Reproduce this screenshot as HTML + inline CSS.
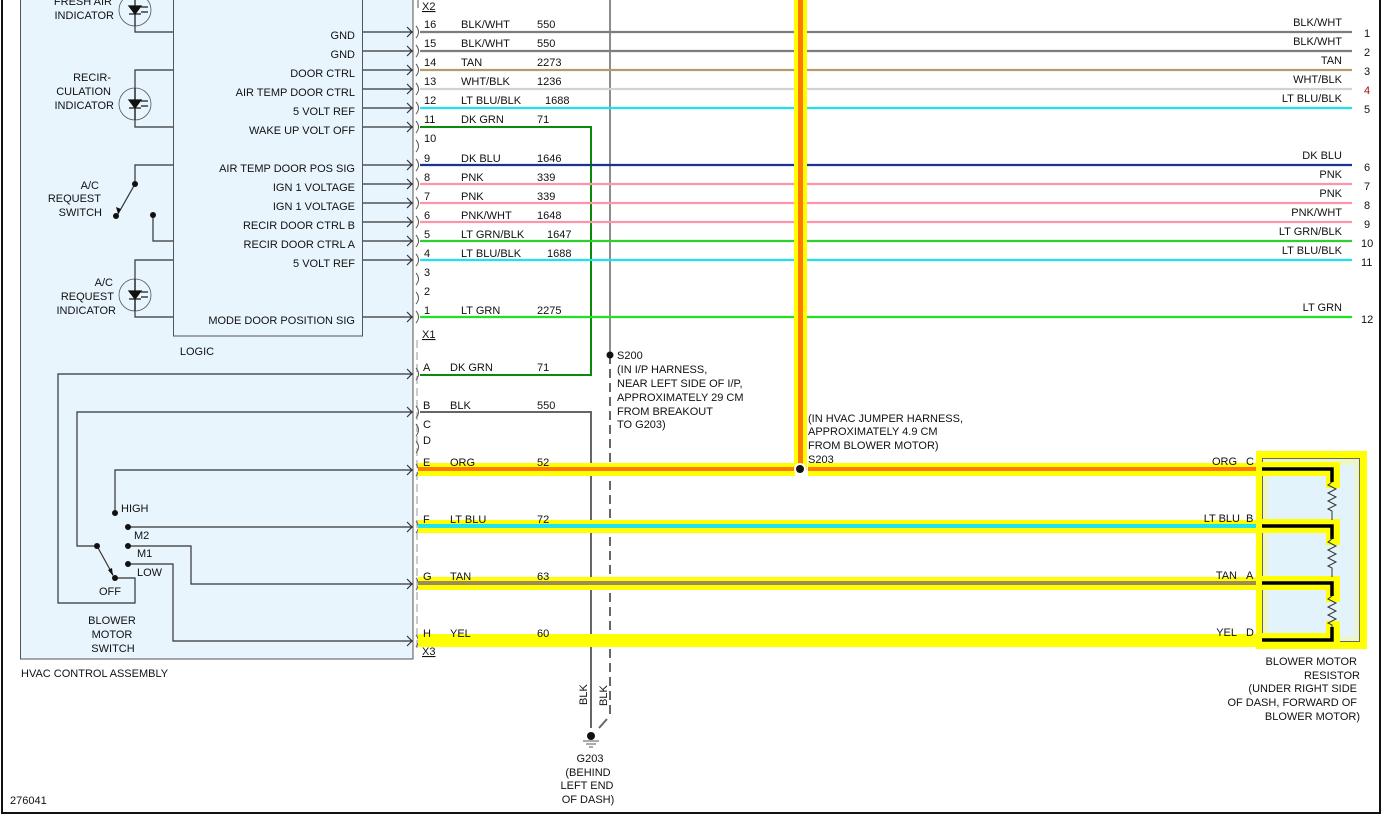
<!DOCTYPE html>
<html><head><meta charset="utf-8"><style>
html,body{margin:0;padding:0;background:#fff;}
svg{display:block;}
text{font-family:"Liberation Sans",Arial,sans-serif;font-size:11px;fill:#111;}
.r{text-anchor:end;}
.m{text-anchor:middle;}
</style></head><body>
<svg width="1385" height="819" viewBox="0 0 1385 819" xmlns="http://www.w3.org/2000/svg">
<rect x="0" y="0" width="1385" height="819" fill="#fff"/>
<line x1="2" y1="0" x2="2" y2="814" stroke="#111" stroke-width="2"/>
<line x1="1380" y1="0" x2="1380" y2="814" stroke="#111" stroke-width="2"/>
<line x1="2" y1="813" x2="1380" y2="813" stroke="#111" stroke-width="2"/>

<rect x="20.5" y="-5" width="392.5" height="664" fill="#e8f5fd" stroke="#555" stroke-width="1"/>
<rect x="173.5" y="-5" width="189" height="341" fill="#e8f5fd" stroke="#555" stroke-width="1"/>

<line x1="417" y1="340" x2="417" y2="652" stroke="#aaa" stroke-width="1.2" stroke-dasharray="8,4"/>

<g stroke="#333" stroke-width="1.2" fill="none">
<polyline points="173,32 135,32 135,26"/>
<polyline points="173,70 135,70 135,127 173,127"/>
<polyline points="173,165 135,165 135,184"/>
<line x1="135" y1="184" x2="118" y2="214"/>
<polyline points="153,215 153,241 173,241"/>
<polyline points="173,260 135,260 135,317 173,317"/>
<polyline points="413,374 58,374 58,603 135,603 135,578 115,578"/>
<polyline points="413,412 77,412 77,546 97,546"/>
<line x1="97" y1="546" x2="113" y2="575"/>
<polyline points="413,470 115,470 115,513"/>
<line x1="128" y1="527" x2="413" y2="527"/>
<polyline points="128,546 191,546 191,584 413,584"/>
<polyline points="128,564 173,564 173,641 413,641"/>
</g>
<g fill="#111">
<circle cx="135" cy="184" r="3"/><circle cx="116" cy="216" r="3"/><circle cx="153" cy="215" r="3"/>
<circle cx="115" cy="513" r="3"/><circle cx="128" cy="527" r="3"/><circle cx="97" cy="546" r="3"/>
<circle cx="128" cy="546" r="3"/><circle cx="128" cy="564" r="3"/><circle cx="115" cy="578" r="3"/>
<polygon points="113,576 108,570 112,568"/>
<polygon points="118,214 116,207 121,209"/>
</g>

<g fill="none" stroke="#555" stroke-width="0.8">
<circle cx="135" cy="10" r="16"/><circle cx="135" cy="104" r="16"/><circle cx="135" cy="295" r="16"/>
</g>
<g stroke="#111" stroke-width="1.2" fill="#111">
<line x1="135" y1="-6" x2="135" y2="26"/>
<line x1="135" y1="88" x2="135" y2="120"/>
<line x1="135" y1="279" x2="135" y2="311"/>
<polygon points="129,6 141,6 135,14"/><line x1="129" y1="14" x2="141" y2="14"/>
<polygon points="129,100 141,100 135,108"/><line x1="129" y1="108" x2="141" y2="108"/>
<polygon points="129,291 141,291 135,299"/><line x1="129" y1="299" x2="141" y2="299"/>
<line x1="141" y1="7" x2="148" y2="7"/><line x1="141" y1="12" x2="148" y2="12"/>
<line x1="141" y1="101" x2="148" y2="101"/><line x1="141" y1="106" x2="148" y2="106"/>
<line x1="141" y1="292" x2="148" y2="292"/><line x1="141" y1="297" x2="148" y2="297"/>
</g>

<g stroke="#333" stroke-width="1.2" fill="none">
<line x1="363" y1="32" x2="413" y2="32"/><line x1="363" y1="51" x2="413" y2="51"/>
<line x1="363" y1="70" x2="413" y2="70"/><line x1="363" y1="89" x2="413" y2="89"/>
<line x1="363" y1="108" x2="413" y2="108"/><line x1="363" y1="127" x2="413" y2="127"/>
<line x1="363" y1="165" x2="413" y2="165"/><line x1="363" y1="184" x2="413" y2="184"/>
<line x1="363" y1="203" x2="413" y2="203"/><line x1="363" y1="222" x2="413" y2="222"/>
<line x1="363" y1="241" x2="413" y2="241"/><line x1="363" y1="260" x2="413" y2="260"/>
<line x1="363" y1="317" x2="413" y2="317"/>
<path d="M407,27l5,5l-5,5M407,46l5,5l-5,5M407,65l5,5l-5,5M407,84l5,5l-5,5M407,103l5,5l-5,5M407,122l5,5l-5,5M407,160l5,5l-5,5M407,179l5,5l-5,5M407,198l5,5l-5,5M407,217l5,5l-5,5M407,236l5,5l-5,5M407,255l5,5l-5,5M407,312l5,5l-5,5M407,369l5,5l-5,5M407,407l5,5l-5,5M407,465l5,5l-5,5M407,522l5,5l-5,5M407,579l5,5l-5,5M407,636l5,5l-5,5"/>
</g>
<g stroke="#555" stroke-width="1" fill="none">
<path d="M416,26q5,6 0,12M416,45q5,6 0,12M416,64q5,6 0,12M416,83q5,6 0,12M416,102q5,6 0,12M416,121q5,6 0,12M416,140q5,6 0,12M416,159q5,6 0,12M416,178q5,6 0,12M416,197q5,6 0,12M416,216q5,6 0,12M416,235q5,6 0,12M416,254q5,6 0,12M416,273q5,6 0,12M416,292q5,6 0,12M416,311q5,6 0,12"/>
<path d="M416,368q5,6 0,12M416,406q5,6 0,12M416,424q5,6 0,12M416,441q5,6 0,12M416,464q5,6 0,12M416,521q5,6 0,12M416,578q5,6 0,12M416,635q5,6 0,12"/>
<line x1="418" y1="0" x2="418" y2="8"/>
</g>

<line x1="610" y1="0" x2="610" y2="355" stroke="#666" stroke-width="1.5"/>
<line x1="610" y1="355" x2="610" y2="716" stroke="#666" stroke-width="2" stroke-dasharray="9,5"/>
<line x1="607" y1="719" x2="599" y2="728" stroke="#666" stroke-width="2"/>
<circle cx="610" cy="355" r="3.5" fill="#111"/>

<polyline points="420,127 591,127 591,375 420,375" fill="none" stroke="#0a8a0a" stroke-width="2"/>
<polyline points="420,412 591,412 591,728" fill="none" stroke="#666" stroke-width="2"/>
<circle cx="591" cy="736" r="4" fill="#111"/>
<g stroke="#555" stroke-width="1"><line x1="583" y1="741" x2="599" y2="741"/><line x1="586" y1="744" x2="596" y2="744"/><line x1="589" y1="747" x2="593" y2="747"/></g>

<g stroke-width="2.2">
<line x1="420" y1="32" x2="1352" y2="32" stroke="#7d7d7d"/>
<line x1="420" y1="51" x2="1352" y2="51" stroke="#7d7d7d"/>
<line x1="420" y1="70" x2="1352" y2="70" stroke="#b39c6c"/>
<line x1="420" y1="89" x2="1352" y2="89" stroke="#d2d2d2"/>
<line x1="420" y1="108" x2="1352" y2="108" stroke="#1ee3ef"/>
<line x1="420" y1="165" x2="1352" y2="165" stroke="#1a3590"/>
<line x1="420" y1="184" x2="1352" y2="184" stroke="#ff93a8"/>
<line x1="420" y1="203" x2="1352" y2="203" stroke="#ff93a8"/>
<line x1="420" y1="222" x2="1352" y2="222" stroke="#ff93a8"/>
<line x1="420" y1="241" x2="1352" y2="241" stroke="#2fcf2f"/>
<line x1="420" y1="260" x2="1352" y2="260" stroke="#1ee3ef"/>
<line x1="420" y1="317" x2="1352" y2="317" stroke="#22e022"/>
</g>

<rect x="794" y="0" width="13" height="470" fill="#ffff00"/>
<rect x="798" y="0" width="5" height="470" fill="#ff7a00"/>
<rect x="418" y="463" width="377" height="13" fill="#ffff00"/>
<rect x="808" y="463" width="450" height="13" fill="#ffff00"/>
<rect x="418" y="467" width="377" height="4" fill="#ff7a00"/>
<rect x="808" y="467" width="450" height="4" fill="#ff7a00"/>
<rect x="418" y="520" width="840" height="13" fill="#ffff00"/>
<rect x="418" y="524" width="840" height="4" fill="#1ee3ef"/>
<rect x="418" y="577" width="840" height="13" fill="#ffff00"/>
<rect x="418" y="581" width="840" height="4" fill="#a08a5c"/>
<rect x="418" y="634" width="840" height="13" fill="#ffff00"/>
<circle cx="800" cy="469" r="6" fill="#fff"/>
<circle cx="800" cy="469" r="4" fill="#111"/>

<rect x="1256" y="451" width="111" height="198" fill="#ffff00"/>
<rect x="1262.5" y="458.5" width="97" height="183" fill="#eef6c4" stroke="#666" stroke-width="1"/>
<rect x="1268" y="465" width="87" height="172" fill="#e3f3fb"/>
<g fill="#ffff00">
<rect x="1262" y="462" width="78" height="14"/><rect x="1326" y="462" width="14" height="26"/>
<rect x="1262" y="519" width="78" height="14"/><rect x="1326" y="519" width="14" height="26"/>
<rect x="1262" y="576" width="78" height="14"/><rect x="1326" y="576" width="14" height="26"/>
<rect x="1262" y="633" width="78" height="14"/><rect x="1326" y="621" width="14" height="26"/>
</g>
<g stroke="#000" stroke-width="3.5" fill="none">
<polyline points="1262,469 1332,469 1332,482"/>
<polyline points="1262,526 1332,526 1332,539"/>
<polyline points="1262,583 1332,583 1332,596"/>
<polyline points="1262,640 1332,640 1332,627"/>
</g>
<g stroke="#333" stroke-width="1" fill="none">
<path d="M1332,482l-4,3l8,4l-8,4l8,4l-8,4l8,4l-8,4l4,2v9"/>
<path d="M1332,539l-4,3l8,4l-8,4l8,4l-8,4l8,4l-8,4l4,2v9"/>
<path d="M1332,596l-4,3l8,4l-8,4l8,4l-8,4l8,4l-8,4l4,2v2"/>
</g>

<text x="112" y="5" class="r">FRESH AIR</text>
<text x="114" y="19" class="r">INDICATOR</text>
<text x="111" y="81" class="r">RECIR-</text>
<text x="111" y="95" class="r">CULATION</text>
<text x="114" y="109" class="r">INDICATOR</text>
<text x="99" y="189" class="r">A/C</text>
<text x="101" y="202" class="r">REQUEST</text>
<text x="102" y="216" class="r">SWITCH</text>
<text x="113" y="286" class="r">A/C</text>
<text x="114" y="300" class="r">REQUEST</text>
<text x="116" y="314" class="r">INDICATOR</text>
<text x="355" y="39" class="r">GND</text>
<text x="355" y="58" class="r">GND</text>
<text x="355" y="77" class="r">DOOR CTRL</text>
<text x="355" y="96" class="r">AIR TEMP DOOR CTRL</text>
<text x="355" y="115" class="r">5 VOLT REF</text>
<text x="355" y="134" class="r">WAKE UP VOLT OFF</text>
<text x="355" y="172" class="r">AIR TEMP DOOR POS SIG</text>
<text x="355" y="191" class="r">IGN 1 VOLTAGE</text>
<text x="355" y="210" class="r">IGN 1 VOLTAGE</text>
<text x="355" y="229" class="r">RECIR DOOR CTRL B</text>
<text x="355" y="248" class="r">RECIR DOOR CTRL A</text>
<text x="355" y="267" class="r">5 VOLT REF</text>
<text x="355" y="324" class="r">MODE DOOR POSITION SIG</text>
<text x="197" y="355" class="m">LOGIC</text>
<text x="121" y="512">HIGH</text>
<text x="134" y="539">M2</text>
<text x="137" y="557">M1</text>
<text x="137" y="576">LOW</text>
<text x="110" y="595" class="m">OFF</text>
<text x="112" y="624" class="m">BLOWER</text>
<text x="112" y="638" class="m">MOTOR</text>
<text x="113" y="652" class="m">SWITCH</text>
<text x="21" y="677">HVAC CONTROL ASSEMBLY</text>
<text x="10" y="804">276041</text>

<text x="422" y="10" text-decoration="underline">X2</text>
<g>
<text x="424" y="28">16</text><text x="461" y="28">BLK/WHT</text><text x="537" y="28">550</text>
<text x="424" y="47">15</text><text x="461" y="47">BLK/WHT</text><text x="537" y="47">550</text>
<text x="424" y="66">14</text><text x="461" y="66">TAN</text><text x="537" y="66">2273</text>
<text x="424" y="85">13</text><text x="461" y="85">WHT/BLK</text><text x="537" y="85">1236</text>
<text x="424" y="104">12</text><text x="461" y="104">LT BLU/BLK</text><text x="545" y="104">1688</text>
<text x="424" y="123">11</text><text x="461" y="123">DK GRN</text><text x="537" y="123">71</text>
<text x="424" y="142">10</text>
<text x="424" y="162">9</text><text x="461" y="162">DK BLU</text><text x="537" y="162">1646</text>
<text x="424" y="181">8</text><text x="461" y="181">PNK</text><text x="537" y="181">339</text>
<text x="424" y="200">7</text><text x="461" y="200">PNK</text><text x="537" y="200">339</text>
<text x="424" y="219">6</text><text x="461" y="219">PNK/WHT</text><text x="537" y="219">1648</text>
<text x="424" y="238">5</text><text x="461" y="238">LT GRN/BLK</text><text x="547" y="238">1647</text>
<text x="424" y="257">4</text><text x="461" y="257">LT BLU/BLK</text><text x="547" y="257">1688</text>
<text x="424" y="276">3</text>
<text x="424" y="295">2</text>
<text x="424" y="314">1</text><text x="461" y="314">LT GRN</text><text x="537" y="314">2275</text>
</g>
<text x="422" y="338" text-decoration="underline">X1</text>
<text x="423" y="371">A</text><text x="450" y="371">DK GRN</text><text x="537" y="371">71</text>
<text x="423" y="409">B</text><text x="450" y="409">BLK</text><text x="537" y="409">550</text>
<text x="423" y="428">C</text>
<text x="423" y="444">D</text>
<text x="423" y="466">E</text><text x="450" y="466">ORG</text><text x="537" y="466">52</text>
<text x="423" y="523">F</text><text x="450" y="523">LT BLU</text><text x="537" y="523">72</text>
<text x="423" y="580">G</text><text x="450" y="580">TAN</text><text x="537" y="580">63</text>
<text x="423" y="637">H</text><text x="450" y="637">YEL</text><text x="537" y="637">60</text>
<text x="422" y="655" text-decoration="underline">X3</text>

<text x="617" y="359">S200</text>
<text x="617" y="373">(IN I/P HARNESS,</text>
<text x="617" y="387">NEAR LEFT SIDE OF I/P,</text>
<text x="617" y="401">APPROXIMATELY 29 CM</text>
<text x="617" y="415">FROM BREAKOUT</text>
<text x="617" y="428">TO G203)</text>
<text x="808" y="422">(IN HVAC JUMPER HARNESS,</text>
<text x="808" y="435">APPROXIMATELY 4.9 CM</text>
<text x="808" y="449">FROM BLOWER MOTOR)</text>
<text x="808" y="463">S203</text>

<text transform="translate(587,705) rotate(-90)">BLK</text>
<text transform="translate(607,706) rotate(-90)">BLK</text>
<text x="590" y="762" class="m">G203</text>
<text x="588" y="776" class="m">(BEHIND</text>
<text x="587" y="789" class="m">LEFT END</text>
<text x="588" y="803" class="m">OF DASH)</text>

<g>
<text x="1342" y="26" class="r">BLK/WHT</text>
<text x="1342" y="45" class="r">BLK/WHT</text>
<text x="1342" y="64" class="r">TAN</text>
<text x="1342" y="83" class="r">WHT/BLK</text>
<text x="1342" y="102" class="r">LT BLU/BLK</text>
<text x="1342" y="159" class="r">DK BLU</text>
<text x="1342" y="178" class="r">PNK</text>
<text x="1342" y="197" class="r">PNK</text>
<text x="1342" y="216" class="r">PNK/WHT</text>
<text x="1342" y="235" class="r">LT GRN/BLK</text>
<text x="1342" y="254" class="r">LT BLU/BLK</text>
<text x="1342" y="311" class="r">LT GRN</text>
<text x="1364" y="37">1</text><text x="1364" y="56">2</text><text x="1364" y="75">3</text>
<text x="1364" y="94" style="fill:#a01010">4</text><text x="1364" y="113">5</text>
<text x="1364" y="171">6</text><text x="1364" y="190">7</text><text x="1364" y="209">8</text>
<text x="1364" y="228">9</text><text x="1361" y="247">10</text><text x="1361" y="266">11</text>
<text x="1361" y="323">12</text>
</g>
<text x="1237" y="465" class="r">ORG</text><text x="1246" y="465">C</text>
<text x="1240" y="522" class="r">LT BLU</text><text x="1246" y="522">B</text>
<text x="1237" y="579" class="r">TAN</text><text x="1246" y="579">A</text>
<text x="1237" y="636" class="r">YEL</text><text x="1246" y="636">D</text>
<text x="1357" y="665" class="r">BLOWER MOTOR</text>
<text x="1360" y="679" class="r">RESISTOR</text>
<text x="1357" y="692" class="r">(UNDER RIGHT SIDE</text>
<text x="1357" y="706" class="r">OF DASH, FORWARD OF</text>
<text x="1360" y="720" class="r">BLOWER MOTOR)</text>
</svg>
</body></html>
